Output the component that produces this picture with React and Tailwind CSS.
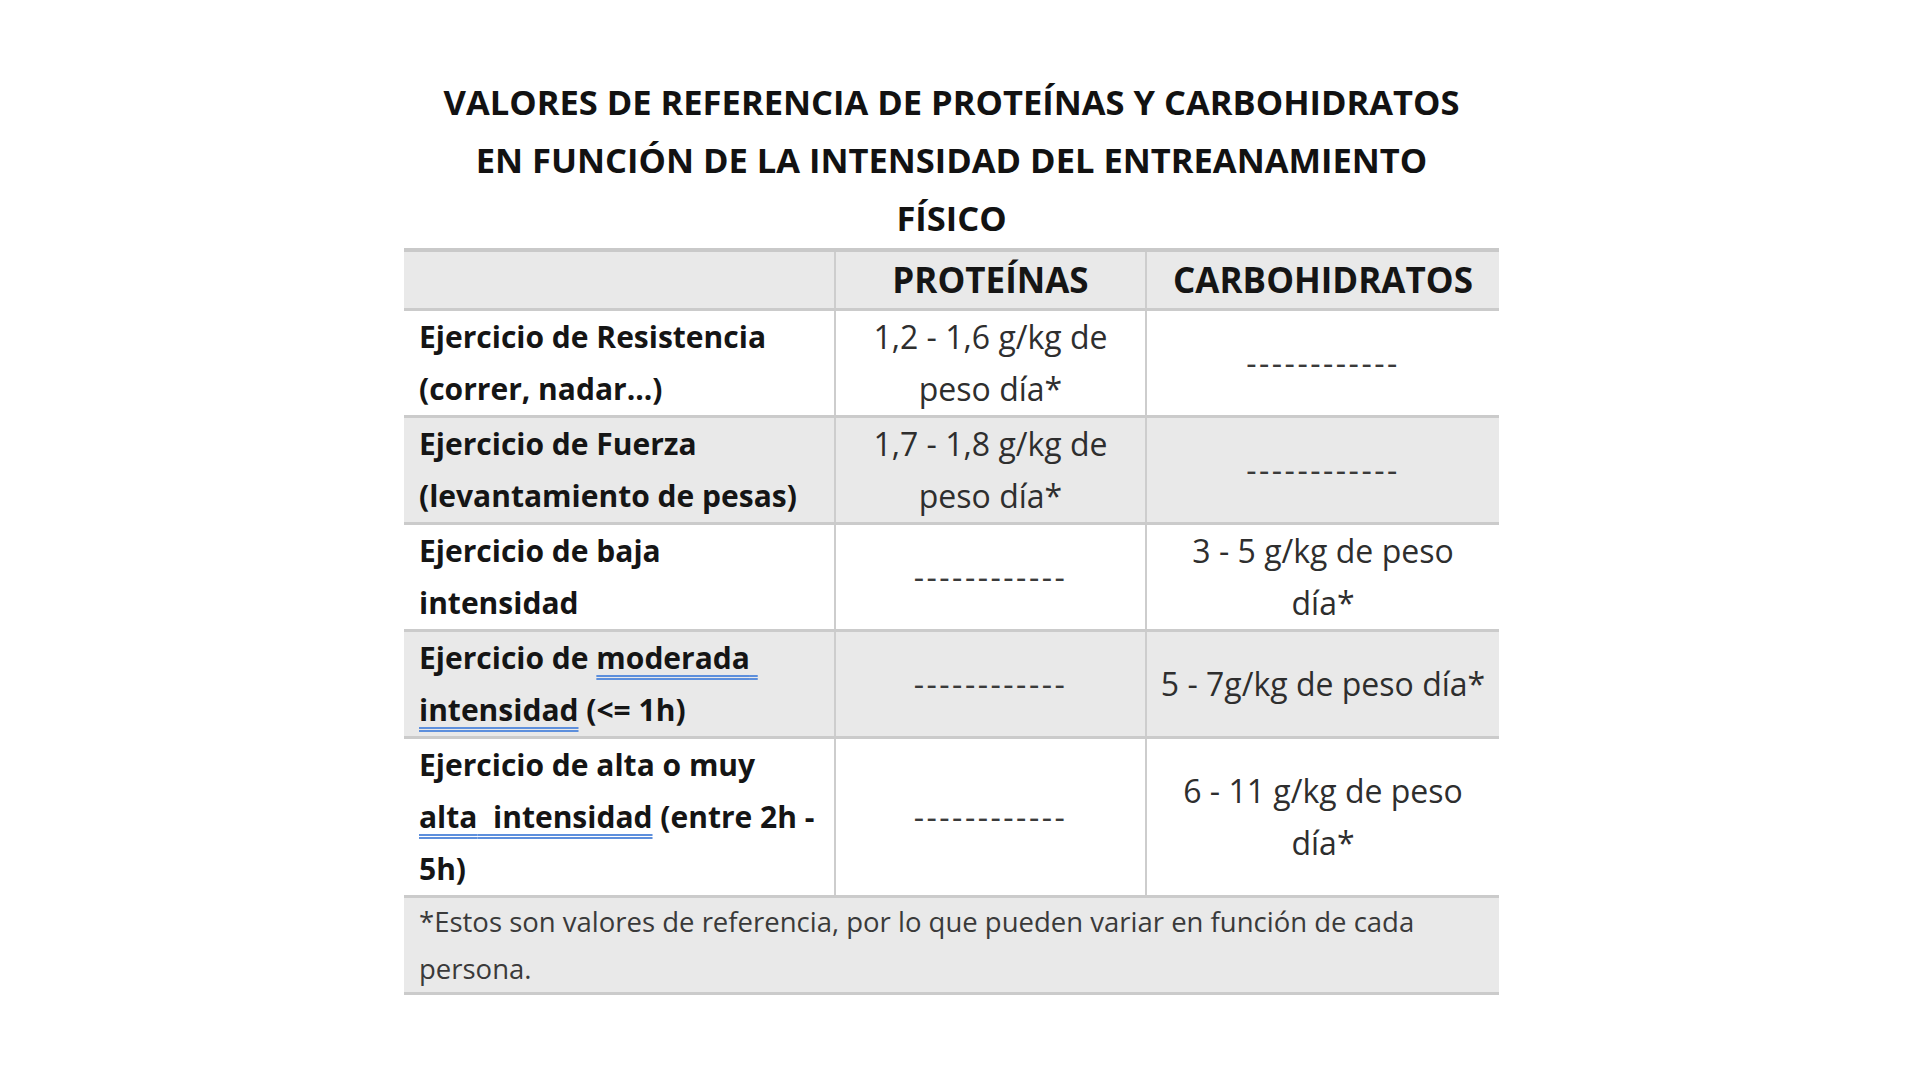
const rows = [
  {
    label: <>Ejercicio de Resistencia<br />(correr, nadar...)</>,
    prot: <>1,2 - 1,6 g/kg de<br />peso día*</>,
    carb: null,
    shade: false,
  },
  {
    label: <>Ejercicio de Fuerza<br />(levantamiento de pesas)</>,
    prot: <>1,7 - 1,8 g/kg de<br />peso día*</>,
    carb: null,
    shade: true,
  },
  {
    label: <>Ejercicio de baja<br />intensidad</>,
    prot: null,
    carb: <>3 - 5 g/kg de peso<br />día*</>,
    shade: false,
  },
  {
    label: (
      <>
        Ejercicio de <Flagged>moderada{'\u00A0'}</Flagged>
        <br />
        <Flagged>intensidad</Flagged> (&lt;= 1h)
      </>
    ),
    prot: null,
    carb: <>5 - 7g/kg de peso día*</>,
    shade: true,
  },
  {
    label: (
      <>
        Ejercicio de alta o muy
        <br />
        <Flagged>alta{'\u00A0\u00A0'}intensidad</Flagged> (entre 2h -
        <br />
        5h)
      </>
    ),
    prot: null,
    carb: <>6 - 11 g/kg de peso<br />día*</>,
    shade: false,
  },
];

// Word-style grammar squiggle
function Flagged({ children }) {
  return (
    <span className="underline decoration-double decoration-[#5d8fdc] decoration-2 underline-offset-[6px]">
      {children}
    </span>
  );
}

function Empty() {
  return <span className="tracking-[2.5px] text-[#3a3a3a]">------------</span>;
}

export default function App() {
  return (
    <div
      className="min-h-screen w-full bg-white text-[#151515]"
      style={{ fontFamily: '"Open Sans", "Noto Sans", Arial, sans-serif' }}
    >
      <div className="ml-[404px] w-[1095px] pt-[73px]">
        {/* Title */}
        <h1 className="text-center text-[34.5px] font-bold leading-[58px] text-[#121212]">
          VALORES DE REFERENCIA DE PROTEÍNAS Y CARBOHIDRATOS
          <br />
          EN FUNCIÓN DE LA INTENSIDAD DEL ENTREANAMIENTO
          <br />
          FÍSICO
        </h1>

        {/* Table */}
        <div className="mt-[1px] border-t-4 border-[#c9c9c9]">
          <div className="grid h-[59px] grid-cols-[432px_311px_352px] border-b-[3px] border-[#cbcbcb] bg-[#e9e9e9]">
            <div className="border-r-2 border-[#cdcdcd]" />
            <div className="flex items-center justify-center border-r-2 border-[#cdcdcd] text-[35px] font-bold">
              PROTEÍNAS
            </div>
            <div className="flex items-center justify-center text-[35px] font-bold">CARBOHIDRATOS</div>
          </div>

          {rows.map((r, i) => (
            <div
              key={i}
              className={`grid grid-cols-[432px_311px_352px] border-b-[3px] border-[#cbcbcb] ${
                r.shade ? 'bg-[#e9e9e9]' : 'bg-white'
              }`}
            >
              <div className="whitespace-nowrap border-r-2 border-[#cdcdcd] pl-[15px] text-[30px] font-bold leading-[52px]">
                {r.label}
              </div>
              <div className="flex items-center justify-center whitespace-nowrap border-r-2 border-[#cdcdcd] text-center text-[32px] leading-[52px] text-[#2e2e2e]">
                {r.prot ?? <Empty />}
              </div>
              <div className="flex items-center justify-center whitespace-nowrap text-center text-[32px] leading-[52px] text-[#2e2e2e]">
                {r.carb ?? <Empty />}
              </div>
            </div>
          ))}

          <div className="border-b-[3px] border-[#cbcbcb] bg-[#e9e9e9] pl-[15px] text-[27.5px] leading-[47px] text-[#3a3a3a]">
            *Estos son valores de referencia, por lo que pueden variar en función de cada
            <br />
            persona.
          </div>
        </div>
      </div>
    </div>
  );
}
